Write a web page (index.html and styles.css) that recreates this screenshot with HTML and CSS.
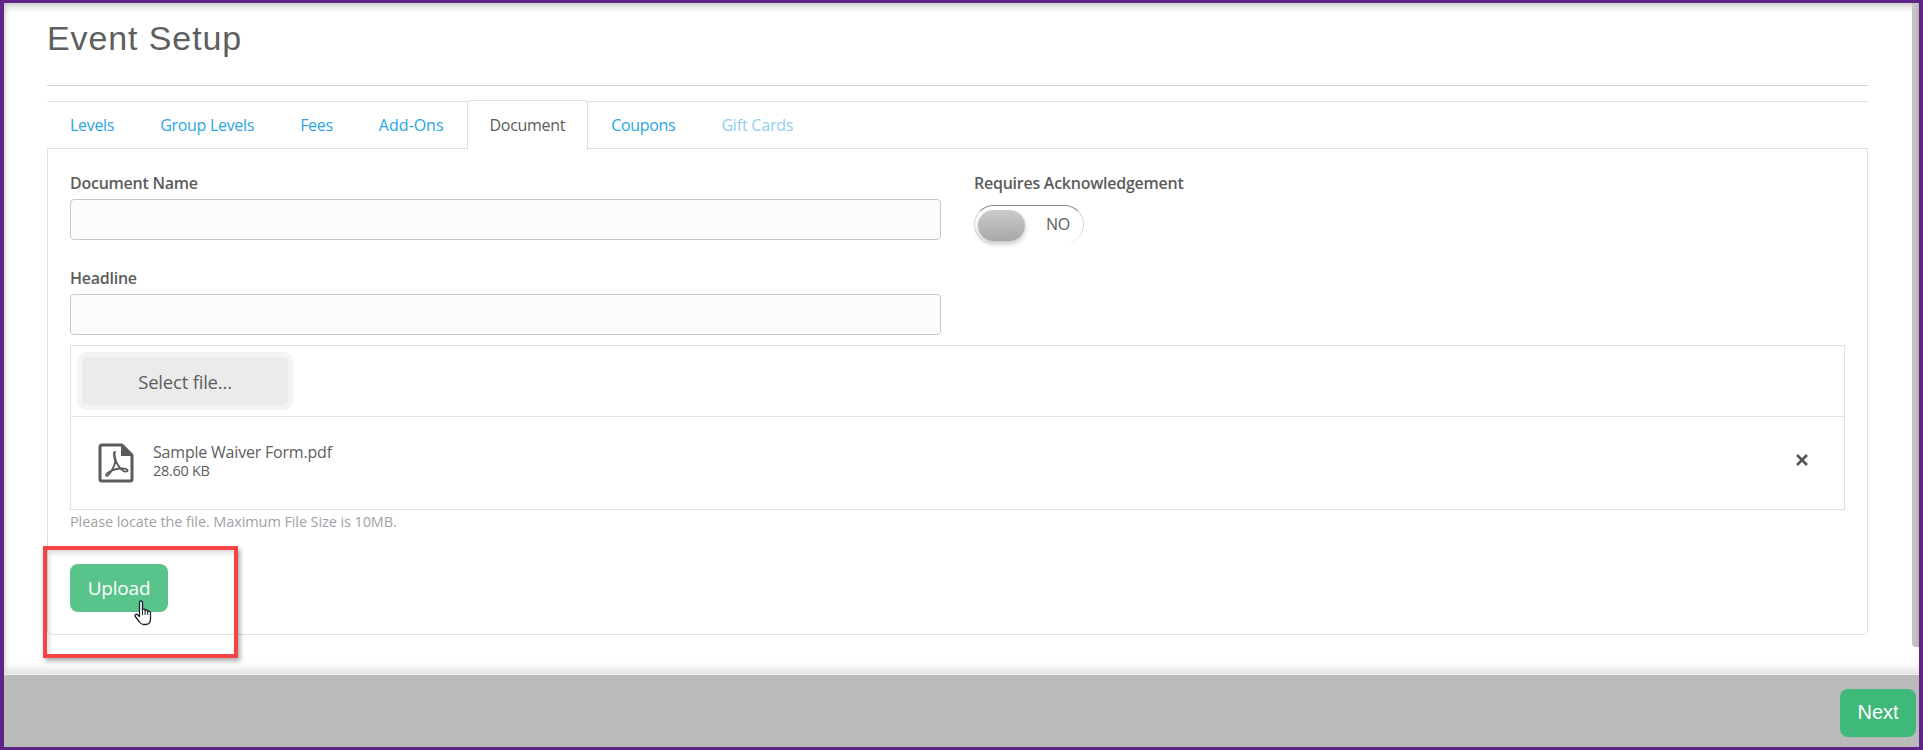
FILE: index.html
```html
<!DOCTYPE html>
<html lang="en">
<head>
<meta charset="utf-8">
<title>Event Setup</title>
<link rel="stylesheet" href="styles.css">
</head>
<body>
<div class="frame">
  <div class="main">
    <div class="content">
      <h1 class="title">Event Setup</h1>
      <hr class="rule">
      <ul class="tabs">
        <li class="tab">Levels</li>
        <li class="tab">Group Levels</li>
        <li class="tab">Fees</li>
        <li class="tab wide">Add-Ons</li>
        <li class="tab active">Document</li>
        <li class="tab">Coupons</li>
        <li class="tab muted">Gift Cards</li>
      </ul>
      <div class="panel">
        <div class="fields">
          <div class="col">
            <label class="label">Document Name</label>
            <div class="input"></div>
            <label class="label second">Headline</label>
            <div class="input"></div>
          </div>
          <div class="col side">
            <label class="label">Requires Acknowledgement</label>
            <div class="toggle"><span class="knob"></span><span class="toggle-text">NO</span></div>
          </div>
        </div>
        <div class="upload">
          <div class="upload-head"><div class="select">Select file...</div></div>
          <div class="file">
            <svg class="pdf" width="36" height="40" viewBox="0 0 36 40" aria-hidden="true">
              <path d="M4 2H24L34 12V36a2 2 0 0 1-2 2H4a2 2 0 0 1-2-2V4a2 2 0 0 1 2-2Z" fill="#fff" stroke="#5c5c5c" stroke-width="3" stroke-linejoin="round"/>
              <path d="M23 1.500V13H34.500Z" fill="#5c5c5c"/>
              <path d="M17 9c-1.500 0-1.500 3 0 8 1 3-3 11-6.500 15-1.500 1.800-3 .5-2-1 2-2.500 8-5 13-5.500 2.500-.3 7-.2 8 1.500.8 1.500-2 2-4 1-3-1.500-7-7-8-11.500-.7-3-1.500-7.500-.5-7.500" fill="none" stroke="#5c5c5c" stroke-width="1.800" stroke-linecap="round"/>
            </svg>
            <div class="file-info">
              <div class="file-name">Sample Waiver Form.pdf</div>
              <div class="file-size">28.60 KB</div>
            </div>
            <svg class="remove" width="14" height="14" viewBox="0 0 14 14" aria-hidden="true">
              <path d="M2 2L12 12M12 2L2 12" stroke="#555" stroke-width="2.600" fill="none"/>
            </svg>
          </div>
        </div>
        <p class="hint">Please locate the file. Maximum File Size is 10MB.</p>
        <button class="btn upload-btn">Upload</button>
      </div>
      <div class="callout"></div>
      <svg class="cursor" width="20" height="26" viewBox="0 0 20 26" aria-hidden="true">
        <path d="M5.500 2.500c0-2 3-2 3 0V10c0-1.500 2.600-1.500 2.600 0v1c0-1.500 2.600-1.500 2.600 0v1c0-1.500 2.800-1.200 2.800.5V19c0 3-1.500 5.500-5 5.500H9.500c-2 0-3-1-4-2.500L1.300 16.500c-1-1.500 1-3 2.400-1.700L5.500 16.500Z" fill="#fff" stroke="#1f2233" stroke-width="1.300" stroke-linejoin="round"/>
        <path d="M8.500 10v5M11.100 11v4M13.700 12v3" stroke="#1f2233" stroke-width="1" fill="none"/>
      </svg>
    </div>
    <div class="scroll"><div class="thumb"></div></div>
  </div>
  <div class="footer"><button class="btn next">Next</button></div>
</div>
</body>
</html>
```

FILE: styles.css
```css
* { box-sizing: border-box; }
html, body { margin: 0; height: 100%; overflow: hidden; background: #fff; }
body { font-family: "Open Sans", "Liberation Sans", sans-serif; color: #5c5c5c; }

.frame {
  width: 1923px;
  height: 750px;
  border: solid #5f2586;
  border-width: 3px 4px;
  display: flex;
  flex-direction: column;
}

.main {
  height: 671px;
  display: flex;
  position: relative;
  box-shadow: inset 0 8px 8px -6px #bbb, inset 0 -14px 10px -10px #ddd, inset 5px 0 5px -4px #ccc;
}
.content { flex: 1; padding: 0 44px 0 43px; position: relative; }
.scroll { width: 7px; }
.thumb { height: 644px; background: #c4c4c4; border-radius: 0 0 0 4px; box-shadow: inset -3px 0 3px -2px #aaa; }

.title {
  margin: 0;
  padding-top: 14px;
  height: 82px;
  font: 400 34px/42px "Liberation Sans", Arial, sans-serif;
  letter-spacing: .9px;
  color: #5e5e5e;
}
.rule { margin: 0; border: 0; border-top: 1px solid #d2d2d2; height: 16px; }

.tabs {
  list-style: none;
  margin: 0;
  padding: 0;
  display: flex;
  height: 48px;
  border-top: 1px solid #dedede;
}
.tab {
  padding: 0 23px;
  font-size: 16px;
  line-height: 47px;
  color: #2ba6e3;
  letter-spacing: -.3px;
}
.tab.wide { letter-spacing: 0; }
.tab.active {
  margin-top: -2px;
  height: 50px;
  padding: 1px 22px 0;
  background: #fff;
  color: #5c5c5c;
  border: 1px solid #e0e0e8;
  border-bottom: 0;
  border-radius: 4px 4px 0 0;
  position: relative;
  z-index: 1;
}
.tab.muted { color: #8ccfee; letter-spacing: -.2px; }

.panel {
  height: 487px;
  margin-top: -1px;
  border: 1px solid #e0e0e8;
  border-radius: 0 0 4px 4px;
  padding: 23px 22px 0;
}

.fields { display: flex; gap: 33px; height: 173px; }
.col { width: 871px; }
.side { width: auto; }
.label {
  display: block;
  font-size: 16px;
  font-weight: 600;
  line-height: 22px;
  height: 27px;
  letter-spacing: -.25px;
  color: #5c5c5c;
}
.second { margin-top: 27px; }
.input {
  height: 41px;
  background: #fcfcfc;
  border: 1px solid #c8c8cc;
  border-radius: 4px;
}

.toggle {
  width: 110px;
  height: 39px;
  margin-top: 6px;
  display: flex;
  align-items: center;
  padding-left: 3px;
  border-radius: 20px;
  border-top: 1px solid #8e8e8e;
  border-left: 1px solid #d6d6d6;
  border-right: 1px solid #d6d6d6;
  background: #fff;
}
.knob {
  width: 47px;
  height: 31px;
  border-radius: 16px;
  background: linear-gradient(#cbcbcb, #a8a8a8);
  box-shadow: 0 3px 5px rgba(0,0,0,.22);
}
.toggle-text { margin: 0 0 2px 21px; font-size: 16px; letter-spacing: -.3px; color: #5c5c5c; line-height: 30px; }

.upload { border: 1px solid #e0e0e8; height: 165px; }
.upload-head { height: 71px; border-bottom: 1px solid #e0e0e8; padding: 6px; }
.select {
  width: 216px;
  height: 58px;
  border: 5px solid #f4f4f4;
  border-radius: 9px;
  background: #ebebeb;
  background-clip: padding-box;
  text-align: center;
  font-size: 18.500px;
  line-height: 50px;
  letter-spacing: -.2px;
  color: #5e5e5e;
}
.file { height: 92px; display: flex; align-items: center; padding: 0 35px 0 27px; }
.file-info { flex: 1; margin: 0 0 4px 19px; }
.file-name { font-size: 16px; line-height: 20px; letter-spacing: -.2px; color: #5e5e5e; }
.file-size { font-size: 14.500px; line-height: 18px; letter-spacing: -.3px; color: #5e5e5e; }
.pdf { display: block; }
.remove { margin-bottom: 6px; }

.hint { margin: 2px 0 0; font-size: 14.500px; line-height: 20px; letter-spacing: -.1px; color: #a2a2a6; }

.btn {
  border: 0;
  color: #fff;
  font-family: "Open Sans", "Liberation Sans", sans-serif;
  cursor: pointer;
}
.upload-btn {
  display: block;
  width: 98px;
  height: 48px;
  margin-top: 32px;
  background: #58c38a;
  border-radius: 8px;
  font-size: 19px;
  letter-spacing: -.2px;
}

.callout {
  position: absolute;
  left: 39px;
  top: 543px;
  width: 195px;
  height: 112px;
  border: 4px solid #f44444;
  box-shadow: 2px 3px 5px rgba(0,0,0,.35), inset 2px 3px 5px rgba(0,0,0,.15);
  pointer-events: none;
}
.cursor { position: absolute; left: 130px; top: 597px; }

.footer {
  flex: 1;
  background: #bababa;
  border-top: 1px solid #f3f3f3;
  display: flex;
  justify-content: flex-end;
  align-items: flex-start;
  padding: 14px 3px 0 0;
}
.next {
  width: 76px;
  height: 48px;
  padding-bottom: 3px;
  background: #3eb97a;
  border-radius: 8px;
  font: 400 20px "Liberation Sans", Arial, sans-serif;
}
```
